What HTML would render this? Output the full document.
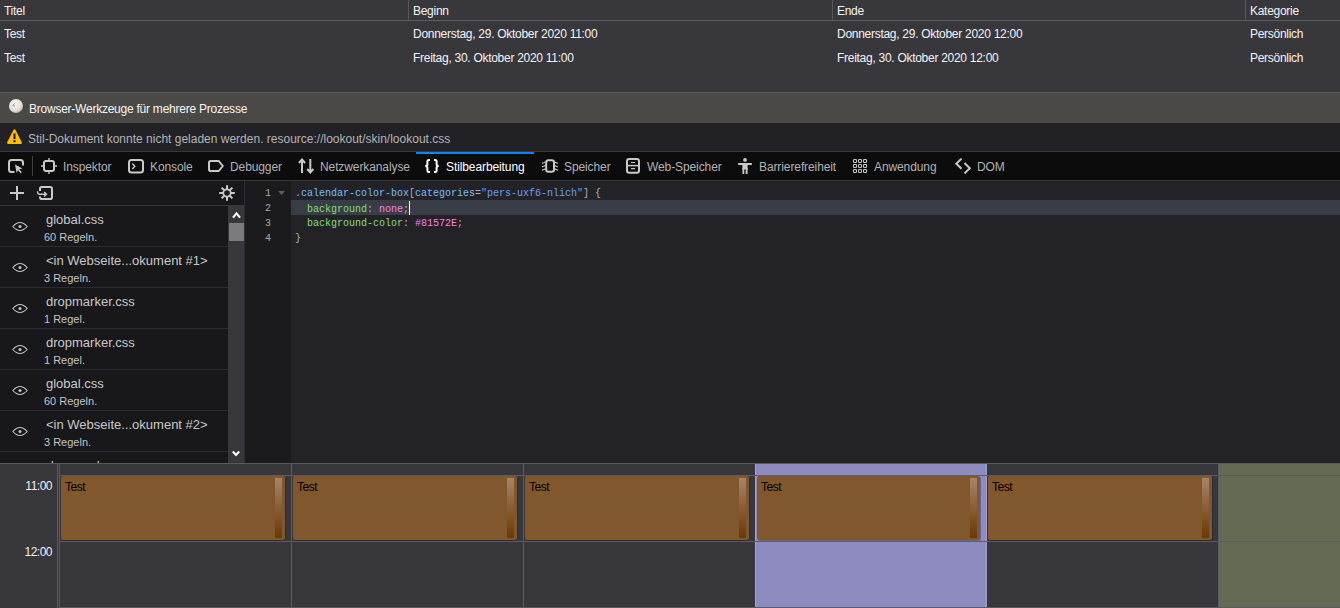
<!DOCTYPE html>
<html><head><meta charset="utf-8">
<style>
*{box-sizing:border-box;margin:0;padding:0}
html,body{width:1340px;height:608px;overflow:hidden;background:#38373c;font-family:"Liberation Sans",sans-serif;font-size:12px}
svg{position:absolute;overflow:visible}
.t{position:absolute;white-space:pre;line-height:1}
#list{position:absolute;left:0;top:0;width:1340px;height:92px;background:#38373c;color:#f4f4f4;letter-spacing:-0.28px}
#list .hdr{position:absolute;left:0;top:0;width:1340px;height:21px;border-bottom:1px solid #5d5c61}
.vsep{position:absolute;top:0;width:1px;height:20px;background:#58575c}
#notif{position:absolute;left:0;top:92px;width:1340px;height:31px;background:#4a4946;border-top:1px solid #5b5955;color:#f6f6f6;letter-spacing:-0.24px}
#warn{position:absolute;left:0;top:123px;width:1340px;height:29px;background:#222226;border-bottom:1px solid #38383c;color:#b4b4b8}
#tabs{position:absolute;left:0;top:152px;width:1340px;height:29px;background:#0c0c0d;border-bottom:1px solid #38383d;color:#b1b1b3;letter-spacing:-0.1px}
#tabs .t{top:9px}
#side{position:absolute;left:0;top:181px;width:244px;height:282px;background:#18181a;overflow:hidden}
#stb{position:absolute;left:0;top:0;width:244px;height:25px;border-bottom:1px solid #38383d;color:#d0d0d2}
.item{position:absolute;left:0;width:228px;height:41px;border-bottom:1px solid #2c2c30}
.item .n{position:absolute;left:46px;top:7px;font-size:13px;color:#c9c9cb;white-space:pre;line-height:1}
.item .r{position:absolute;left:44px;top:26px;font-size:11px;color:#c4c4c6;white-space:pre;line-height:1}
#sbar{position:absolute;left:228px;top:25px;width:16px;height:257px;background:#38373c}
#vline{position:absolute;left:244px;top:181px;width:1px;height:282px;background:#2e2e32}
#gutter{position:absolute;left:245px;top:181px;width:46px;height:282px;background:#1b1b1d}
#code{position:absolute;left:291px;top:181px;width:1049px;height:282px;background:#232327;font-family:"Liberation Mono",monospace;font-size:10px}
.ln{position:absolute;left:245px;width:26px;text-align:right;font-family:"Liberation Mono",monospace;font-size:10px;color:#a8a8ac;line-height:15px;height:15px}
.cl{position:absolute;left:4px;height:15px;line-height:15px;white-space:pre;color:#b1b1b3}
.sel{color:#75bfff}.str{color:#66a0f8}.prop{color:#86de74}.val{color:#ff7de9}
#cal{position:absolute;left:0;top:463px;width:1340px;height:145px;background:#38373c;border-top:1px solid #5a595e}
.col{position:absolute;top:0;height:145px}
.vl{position:absolute;top:0;width:1px;height:145px;background:#5c5b61}
.hl{position:absolute;left:59px;width:1281px;height:1px;background:#5c5b61}
.ev{position:absolute;top:12px;height:64px;width:224px;background:#81572e;border-radius:2px;box-shadow:1px 1px 0 rgba(20,20,40,0.3)}
.ev .et{position:absolute;left:4px;top:5px;color:#000;font-size:12px;letter-spacing:-0.5px;line-height:1}
.ev .bar{position:absolute;right:3px;top:2px;width:7px;height:60px;background:linear-gradient(#a88466,#7d4f20 70%,#6a3804)}
.tm{position:absolute;color:#f0f0f0;font-size:12px;letter-spacing:-0.5px;line-height:1;text-align:right;width:52px;left:0}
</style></head><body>
<div id="list">
  <div class="hdr"></div>
  <div class="vsep" style="left:408px"></div>
  <div class="vsep" style="left:832px"></div>
  <div class="vsep" style="left:1245px"></div>
  <div class="t" style="left:4px;top:5px">Titel</div>
  <div class="t" style="left:413px;top:5px">Beginn</div>
  <div class="t" style="left:837px;top:5px">Ende</div>
  <div class="t" style="left:1250px;top:5px">Kategorie</div>
  <div class="t" style="left:4px;top:28px">Test</div>
  <div class="t" style="left:413px;top:28px">Donnerstag, 29. Oktober 2020 11:00</div>
  <div class="t" style="left:837px;top:28px">Donnerstag, 29. Oktober 2020 12:00</div>
  <div class="t" style="left:1250px;top:28px">Persönlich</div>
  <div class="t" style="left:4px;top:52px">Test</div>
  <div class="t" style="left:413px;top:52px">Freitag, 30. Oktober 2020 11:00</div>
  <div class="t" style="left:837px;top:52px">Freitag, 30. Oktober 2020 12:00</div>
  <div class="t" style="left:1250px;top:52px">Persönlich</div>
</div>
<div id="notif">
  <svg style="left:9px;top:6px" width="14" height="14" viewBox="0 0 14 14">
    <defs><radialGradient id="pg" cx="0.4" cy="0.35" r="0.7"><stop offset="0" stop-color="#fbf7f2"/><stop offset="0.7" stop-color="#e4dbd2"/><stop offset="1" stop-color="#b5aaa0"/></radialGradient></defs>
    <circle cx="7" cy="7" r="7" fill="url(#pg)"/>
    <path d="M5.5 4.5 L3.8 6.5 L5.8 7.2" stroke="#6a8ab0" stroke-width="1" fill="none"/>
  </svg>
  <div class="t" style="left:29px;top:10px">Browser-Werkzeuge für mehrere Prozesse</div>
</div>
<div id="warn">
  <svg style="left:7px;top:6px" width="15" height="15" viewBox="0 0 14 14">
    <path d="M7 0.2 Q7.6 0.2 8 0.9 L13.8 12.4 Q14.1 13.8 12.8 13.9 H1.2 Q-0.1 13.8 0.2 12.4 L6 0.9 Q6.4 0.2 7 0.2Z" fill="#ffbf00"/>
    <rect x="6.1" y="4.2" width="1.8" height="5.2" fill="#111"/><rect x="6.1" y="10.4" width="1.8" height="1.9" fill="#111"/>
  </svg>
  <div class="t" style="left:28px;top:10px">Stil-Dokument konnte nicht geladen werden. resource://lookout/skin/lookout.css</div>
</div>
<div id="tabs">
  <div style="position:absolute;left:416px;top:0;width:118px;height:2px;background:#0a84ff"></div>
  <svg style="left:8px;top:158px;top:6px" width="16" height="16" viewBox="0 0 16 16" fill="none" stroke="#c9c9cb">
    <path d="M6.5 14 H3.5 Q1 14 1 11.5 V4.5 Q1 2 3.5 2 H12.5 Q15 2 15 4.5 V7.5" stroke-width="2"/>
    <path d="M7 6.5 L14.5 10.5 L11.3 11.3 L13.8 14.2 L12.6 15.2 L10.1 12.3 L8.5 14.8 Z" fill="#c9c9cb" stroke="none"/>
  </svg>
  <div style="position:absolute;left:32px;top:4px;width:1px;height:20px;background:#404045"></div>
  <svg style="left:41px;top:6px" width="16" height="16" viewBox="0 0 16 16" fill="none" stroke="#c9c9cb">
    <rect x="3" y="3" width="10" height="10" rx="2" stroke-width="2"/>
    <path d="M8 0 V2.5 M8 13.5 V16 M0 8 H2.5 M13.5 8 H16" stroke-width="1.4"/>
  </svg>
  <div class="t" style="left:63px">Inspektor</div>
  <svg style="left:128px;top:6px" width="16" height="16" viewBox="0 0 16 16" fill="none" stroke="#c9c9cb">
    <rect x="1" y="2" width="14" height="12.5" rx="2.5" stroke-width="2"/>
    <path d="M4.3 5.6 L6.8 8.3 L4.3 11" stroke-width="1.4"/>
  </svg>
  <div class="t" style="left:150px">Konsole</div>
  <svg style="left:208px;top:6px" width="16" height="16" viewBox="0 0 16 16" fill="none" stroke="#c9c9cb">
    <path d="M2.8 3 H10.8 L14.8 8 L10.8 13 H2.8 Q1 13 1 11.2 V4.8 Q1 3 2.8 3 Z" stroke-width="2" stroke-linejoin="round"/>
  </svg>
  <div class="t" style="left:230px">Debugger</div>
  <svg style="left:298px;top:6px" width="16" height="16" viewBox="0 0 16 16" fill="none" stroke="#c9c9cb" stroke-width="2">
    <path d="M4 15 V1.8 M0.9 5 L4 1.6 L7.1 5"/>
    <path d="M12.3 1 V14.2 M9.2 11 L12.3 14.4 L15.4 11"/>
  </svg>
  <div class="t" style="left:320px">Netzwerkanalyse</div>
  <svg style="left:424px;top:6px" width="16" height="16" viewBox="0 0 16 16" fill="none" stroke="#ffffff" stroke-width="2">
    <path d="M6 2.1 H4.9 Q3.4 2.1 3.4 3.6 V6.3 Q3.4 8 1.3 8 Q3.4 8 3.4 9.7 V12.4 Q3.4 13.9 4.9 13.9 H6"/>
    <path d="M10 2.1 H11.1 Q12.6 2.1 12.6 3.6 V6.3 Q12.6 8 14.7 8 Q12.6 8 12.6 9.7 V12.4 Q12.6 13.9 11.1 13.9 H10"/>
  </svg>
  <div class="t" style="left:446px;color:#ffffff">Stilbearbeitung</div>
  <svg style="left:542px;top:6px" width="16" height="16" viewBox="0 0 16 16" fill="none" stroke="#c9c9cb">
    <rect x="4.2" y="2.2" width="7.8" height="11.6" rx="2.2" stroke-width="2"/>
    <path d="M0.4 5.3 Q1.8 4.8 3.2 4 M0.4 8.7 Q1.8 8.2 3.2 7.4 M0.4 12.1 Q1.8 11.6 3.2 10.8 M12.8 4 Q14.2 4.8 15.6 5.3 M12.8 7.4 Q14.2 8.2 15.6 8.7 M12.8 10.8 Q14.2 11.6 15.6 12.1" stroke-width="1.1" stroke-linecap="round"/>
  </svg>
  <div class="t" style="left:564px">Speicher</div>
  <svg style="left:625px;top:6px" width="16" height="16" viewBox="0 0 16 16" fill="none" stroke="#c9c9cb">
    <rect x="2" y="1" width="12" height="13.8" rx="2.2" stroke-width="2"/>
    <path d="M2 7.6 H14" stroke-width="1.5"/>
    <path d="M6 4.5 H10 M6 10.7 H10" stroke-width="1.2"/>
  </svg>
  <div class="t" style="left:647px">Web-Speicher</div>
  <svg style="left:737px;top:6px" width="16" height="16" viewBox="0 0 16 16" fill="#c9c9cb">
    <circle cx="8" cy="1.9" r="1.9"/>
    <rect x="1" y="4.9" width="14" height="2.2" rx="0.8"/>
    <rect x="5.4" y="5" width="5.2" height="6.4"/>
    <rect x="5.4" y="10" width="1.9" height="6"/>
    <rect x="8.7" y="10" width="1.9" height="6"/>
  </svg>
  <div class="t" style="left:759px">Barrierefreiheit</div>
  <svg style="left:852px;top:6px" width="16" height="16" viewBox="0 0 16 16" fill="none" stroke="#c4c4c6" stroke-width="1.1">
    <rect x="1.5" y="1.5" width="3" height="3" rx="0.8"/><rect x="6.5" y="1.5" width="3" height="3" rx="0.8"/><rect x="11.5" y="1.5" width="3" height="3" rx="0.8"/>
    <rect x="1.5" y="6.5" width="3" height="3" rx="0.8"/><rect x="6.5" y="6.5" width="3" height="3" rx="0.8"/><rect x="11.5" y="6.5" width="3" height="3" rx="0.8"/>
    <rect x="1.5" y="11.5" width="3" height="3" rx="0.8"/><rect x="6.5" y="11.5" width="3" height="3" rx="0.8"/><rect x="11.5" y="11.5" width="3" height="3" rx="0.8"/>
  </svg>
  <div class="t" style="left:874px">Anwendung</div>
  <svg style="left:954px;top:5px" width="18" height="18" viewBox="0 0 18 18" fill="none" stroke="#c9c9cb" stroke-width="2">
    <path d="M7.5 1.6 L2.3 6.7 L7.5 11.8"/>
    <path d="M10.5 6 L15.8 11.2 L10.5 16.4"/>
  </svg>
  <div class="t" style="left:977px">DOM</div>
</div>
<div id="side">
  <div id="stb">
    <svg style="left:10px;top:5px" width="14" height="14" viewBox="0 0 14 14" fill="none" stroke="#c9c9cb" stroke-width="2"><path d="M7 0 V14 M0 7 H14"/></svg>
    <svg style="left:36px;top:4px" width="18" height="16" viewBox="0 0 18 16" fill="none" stroke="#c9c9cb">
      <path d="M4 6 V3.8 Q4 2 5.8 2 H14.2 Q16 2 16 3.8 V12.2 Q16 14 14.2 14 H5.8 Q4 14 4 12.2 V11.6" stroke-width="2"/>
      <path d="M1.6 6.2 V7.6 Q1.6 9.3 3.3 9.3 H10.4 M8.2 7 L10.5 9.3 L8.2 11.6" stroke-width="1.4"/>
    </svg>
    <svg style="left:219px;top:4px" width="16" height="16" viewBox="0 0 16 16" fill="none" stroke="#c9c9cb">
      <circle cx="8" cy="8" r="3.7" stroke-width="1.8"/>
      <path d="M8 0.2 V4.3 M8 11.7 V15.8 M0.2 8 H4.3 M11.7 8 H15.8 M2.6 2.6 L5.2 5.2 M10.8 10.8 L13.4 13.4 M13.4 2.6 L10.8 5.2 M5.2 10.8 L2.6 13.4" stroke-width="2"/>
    </svg>
  </div>
  <div class="item" style="top:25px"><svg style="left:12px;top:15px" width="16" height="11" viewBox="0 0 16 11" fill="none" stroke="#c4c4c6"><path d="M0.8 5.5 Q8 -2.5 15.2 5.5 Q8 13.5 0.8 5.5Z" stroke-width="1.1"/><circle cx="8" cy="5.5" r="1.5" fill="#c4c4c6" stroke="none"/></svg><div class="n">global.css</div><div class="r">60 Regeln.</div></div>
  <div class="item" style="top:66px"><svg style="left:12px;top:15px" width="16" height="11" viewBox="0 0 16 11" fill="none" stroke="#c4c4c6"><path d="M0.8 5.5 Q8 -2.5 15.2 5.5 Q8 13.5 0.8 5.5Z" stroke-width="1.1"/><circle cx="8" cy="5.5" r="1.5" fill="#c4c4c6" stroke="none"/></svg><div class="n">&lt;in Webseite...okument #1&gt;</div><div class="r">3 Regeln.</div></div>
  <div class="item" style="top:107px"><svg style="left:12px;top:15px" width="16" height="11" viewBox="0 0 16 11" fill="none" stroke="#c4c4c6"><path d="M0.8 5.5 Q8 -2.5 15.2 5.5 Q8 13.5 0.8 5.5Z" stroke-width="1.1"/><circle cx="8" cy="5.5" r="1.5" fill="#c4c4c6" stroke="none"/></svg><div class="n">dropmarker.css</div><div class="r">1 Regel.</div></div>
  <div class="item" style="top:148px"><svg style="left:12px;top:15px" width="16" height="11" viewBox="0 0 16 11" fill="none" stroke="#c4c4c6"><path d="M0.8 5.5 Q8 -2.5 15.2 5.5 Q8 13.5 0.8 5.5Z" stroke-width="1.1"/><circle cx="8" cy="5.5" r="1.5" fill="#c4c4c6" stroke="none"/></svg><div class="n">dropmarker.css</div><div class="r">1 Regel.</div></div>
  <div class="item" style="top:189px"><svg style="left:12px;top:15px" width="16" height="11" viewBox="0 0 16 11" fill="none" stroke="#c4c4c6"><path d="M0.8 5.5 Q8 -2.5 15.2 5.5 Q8 13.5 0.8 5.5Z" stroke-width="1.1"/><circle cx="8" cy="5.5" r="1.5" fill="#c4c4c6" stroke="none"/></svg><div class="n">global.css</div><div class="r">60 Regeln.</div></div>
  <div class="item" style="top:230px"><svg style="left:12px;top:15px" width="16" height="11" viewBox="0 0 16 11" fill="none" stroke="#c4c4c6"><path d="M0.8 5.5 Q8 -2.5 15.2 5.5 Q8 13.5 0.8 5.5Z" stroke-width="1.1"/><circle cx="8" cy="5.5" r="1.5" fill="#c4c4c6" stroke="none"/></svg><div class="n">&lt;in Webseite...okument #2&gt;</div><div class="r">3 Regeln.</div></div>
  <div class="item" style="top:271px"><div class="n" style="left:46.5px;letter-spacing:0.25px">dropmarker.css</div></div>
  <div id="sbar">
    <svg style="left:4px;top:5px" width="9" height="8" viewBox="0 0 9 8" fill="none" stroke="#ffffff" stroke-width="2.1"><path d="M1 6.6 L4.5 2.4 L8 6.6"/></svg>
    <div style="position:absolute;left:1px;top:17px;width:15px;height:18px;background:#7b7b7d"></div>
    <svg style="left:4px;top:244px" width="8" height="7" viewBox="0 0 8 7" fill="none" stroke="#ffffff" stroke-width="2"><path d="M0.8 1.5 L4 5 L7.2 1.5"/></svg>
  </div>
</div>
<div id="vline"></div>
<div id="gutter"></div>
<div class="ln" style="top:186px">1</div>
<div class="ln" style="top:201px">2</div>
<div class="ln" style="top:216px">3</div>
<div class="ln" style="top:231px">4</div>
<svg style="left:278px;top:191px" width="7" height="4" viewBox="0 0 7 4"><path d="M0 0 H7 L3.5 4Z" fill="#5d5d62"/></svg>
<div id="code">
  <div style="position:absolute;left:0;top:19px;width:1049px;height:15px;background:#383d47"></div>
  <div class="cl" style="top:5px"><span class="sel">.calendar-color-box</span>[<span class="sel">categories</span>=<span class="str">"pers-uxf6-nlich"</span>] {</div>
  <div class="cl" style="top:20px">  <span class="prop">background</span>: <span class="val">none</span>;<span style="display:inline-block;width:1px;height:14px;background:#fff;vertical-align:-3px"></span></div>
  <div class="cl" style="top:35px">  <span class="prop">background-color</span>: <span class="val">#81572E</span>;</div>
  <div class="cl" style="top:50px">}</div>
</div>
<div id="cal">
  <div class="col" style="left:755px;width:232px;background:#8d8bbf"></div>
  <div class="col" style="left:1218px;width:122px;background:#656a55"></div>
  <div class="vl" style="left:57px"></div>
  <div class="vl" style="left:59px"></div>
  <div class="vl" style="left:291px"></div>
  <div class="vl" style="left:523px"></div>
  <div class="vl" style="left:755px;background:#a3a2de"></div>
  <div class="vl" style="left:986px;background:#a3a2de"></div>
  <div class="vl" style="left:987px;background:#333337"></div>
  <div class="vl" style="left:1218px"></div>
  <div class="hl" style="top:11px"></div>
  <div class="hl" style="top:77px"></div>
  <div class="hl" style="top:143px"></div>
  <div class="hl" style="top:11px;left:756px;width:230px;background:#5f5e68"></div>
  <div class="hl" style="top:77px;left:756px;width:230px;background:#5f5e68"></div>
  <div class="hl" style="top:143px;left:756px;width:230px;background:#5f5e68"></div>
  <div class="tm" style="top:16px">11:00</div>
  <div class="tm" style="top:82px">12:00</div>
  <div class="ev" style="left:61px"><div class="et">Test</div><div class="bar"></div></div>
  <div class="ev" style="left:293px"><div class="et">Test</div><div class="bar"></div></div>
  <div class="ev" style="left:525px"><div class="et">Test</div><div class="bar"></div></div>
  <div class="ev" style="left:757px;width:223px"><div class="et">Test</div><div class="bar"></div></div>
  <div class="ev" style="left:988px"><div class="et">Test</div><div class="bar"></div></div>
</div>
</body></html>
